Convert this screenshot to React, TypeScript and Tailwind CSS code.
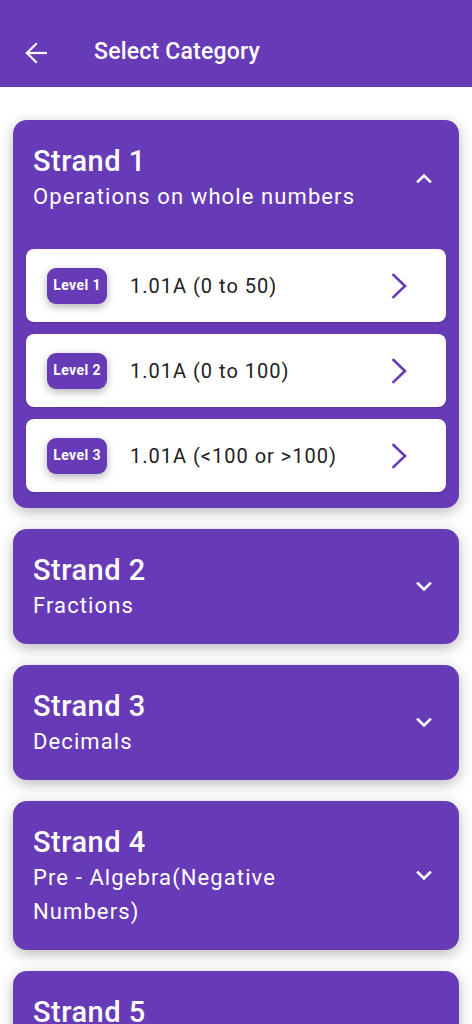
import React from 'react';

const strands = [
  { name: 'Strand 1', desc: 'Operations on whole numbers', open: true },
  { name: 'Strand 2', desc: 'Fractions', open: false },
  { name: 'Strand 3', desc: 'Decimals', open: false },
  { name: 'Strand 4', desc: 'Pre - Algebra(Negative Numbers)', open: false },
  { name: 'Strand 5', desc: 'Measurement', open: false },
];

const levels = [
  { level: 'Level 1', label: '1.01A (0 to 50)' },
  { level: 'Level 2', label: '1.01A (0 to 100)' },
  { level: 'Level 3', label: '1.01A (<100 or >100)' },
];

const BackArrow = () => (
  <svg width="22" height="22" viewBox="0 0 22 22" fill="none" stroke="white" strokeWidth="2.2" strokeLinecap="square">
    <path d="M21 11H2" />
    <path d="M11 2L2 11l9 9" />
  </svg>
);

const Chevron = ({ up }: { up: boolean }) => (
  <svg width="16" height="10" viewBox="0 0 16 10" fill="none" stroke="white" strokeWidth="2.6" strokeLinecap="square">
    {up ? <path d="M2 8.5L8 2.5l6 6" /> : <path d="M2 1.5l6 6 6-6" />}
  </svg>
);

const ArrowRight = () => (
  <svg width="16" height="26" viewBox="0 0 16 26" fill="none" stroke="#673ab7" strokeWidth="2.6" strokeLinecap="square">
    <path d="M2.5 2L14 13 2.5 24" />
  </svg>
);

const LevelRow: React.FC<{ level: string; label: string }> = ({ level, label }) => (
  <div className="flex h-[73px] items-center rounded-lg bg-white pl-[21px] pr-[39px] shadow-[0_1px_2px_rgba(0,0,0,0.15)]">
    <div className="flex h-[36px] w-[60px] items-center justify-center rounded-[9px] bg-[#673ab7] text-[14px] font-bold tracking-[0.4px] text-white shadow-[0_3px_8px_rgba(0,0,0,0.3)]">
      {level}
    </div>
    <div className="ml-[23px] flex-1 text-[20px] tracking-[1px] text-[#212121]">{label}</div>
    <ArrowRight />
  </div>
);

export default function App() {
  return (
    <div className="min-h-screen bg-white" style={{ fontFamily: 'Roboto, "Noto Sans", sans-serif' }}>
      <header className="flex h-[87px] items-center bg-[#673ab7] pl-[25px] pt-[18px]">
        <BackArrow />
        <h1 className="ml-[47px] text-[23px] font-medium tracking-[0.2px] text-white">Select Category</h1>
      </header>

      <main className="flex flex-col gap-[21px] px-[13px] pt-[33px] pb-6">
        {strands.map(s => (
          <section
            key={s.name}
            className="rounded-[14px] bg-[#673ab7] shadow-[0_4px_14px_rgba(0,0,0,0.28)]"
          >
            <div className="flex items-center pl-[20px] pr-[23px] pt-[22px] pb-[21px]">
              <div className="flex-1 pr-[40px]">
                <div className="text-[29px] font-medium leading-[38px] tracking-[0.5px] text-white">{s.name}</div>
                <div className="text-[22px] leading-[34px] tracking-[1.1px] text-white">{s.desc}</div>
              </div>
              <div className="flex w-6 justify-center">
                <Chevron up={s.open} />
              </div>
            </div>
            {s.open && (
              <div className="flex flex-col gap-3 px-[13px] pt-[14px] pb-[16px]">
                {levels.map(l => (
                  <LevelRow key={l.level} level={l.level} label={l.label} />
                ))}
              </div>
            )}
          </section>
        ))}
      </main>
    </div>
  );
}
